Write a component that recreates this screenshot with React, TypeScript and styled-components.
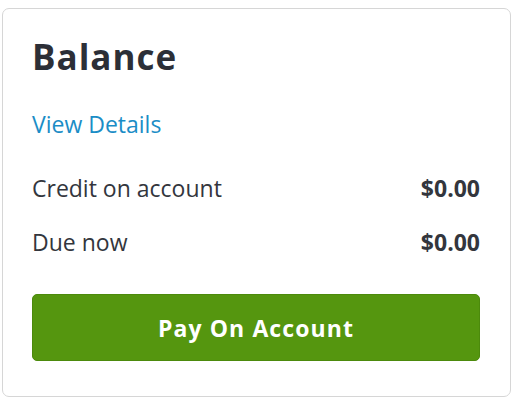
import styled, { createGlobalStyle } from "styled-components";

const GlobalStyle = createGlobalStyle`
  body {
    margin: 0;
    background: #ffffff;
    font-family: "Open Sans", "Liberation Sans", sans-serif;
  }
`;

const Card = styled.div`
  box-sizing: border-box;
  width: 509px;
  height: 389px;
  margin: 8px 0 0 2px;
  padding: 28px 30px 35px 29px;
  border: 1px solid #d6d6d6;
  border-radius: 7px;
  background: #fff;
  display: flex;
  flex-direction: column;
`;

const Title = styled.h2`
  margin: 0;
  font-size: 35px;
  line-height: 40px;
  font-weight: 700;
  letter-spacing: 1px;
  color: #2c2f37;
`;

const DetailsLink = styled.a`
  margin-top: 33px;
  font-size: 23px;
  line-height: 28px;
  color: #1b8dc6;
  text-decoration: none;
  cursor: pointer;
`;

const Rows = styled.div`
  margin-top: 36px;
  display: flex;
  flex-direction: column;
  gap: 26px;
`;

const Row = styled.div`
  display: flex;
  justify-content: space-between;
  align-items: baseline;
  font-size: 23px;
  line-height: 28px;
  color: #33363d;
`;

const Amount = styled.span`
  font-weight: 700;
`;

const PayButton = styled.button`
  margin-top: auto;
  height: 67px;
  border: 1px solid #4c8a0c;
  border-radius: 5px;
  background: #55960f;
  color: #fff;
  font-family: inherit;
  font-size: 23px;
  font-weight: 700;
  letter-spacing: 1.1px;
  cursor: pointer;
`;

const rows = [
  { label: "Credit on account", amount: "$0.00" },
  { label: "Due now", amount: "$0.00" },
];

export default function App() {
  return (
    <>
      <GlobalStyle />
      <Card>
        <Title>Balance</Title>
        <DetailsLink>View Details</DetailsLink>
        <Rows>
          {rows.map((r) => (
            <Row key={r.label}>
              <span>{r.label}</span>
              <Amount>{r.amount}</Amount>
            </Row>
          ))}
        </Rows>
        <PayButton>Pay On Account</PayButton>
      </Card>
    </>
  );
}
